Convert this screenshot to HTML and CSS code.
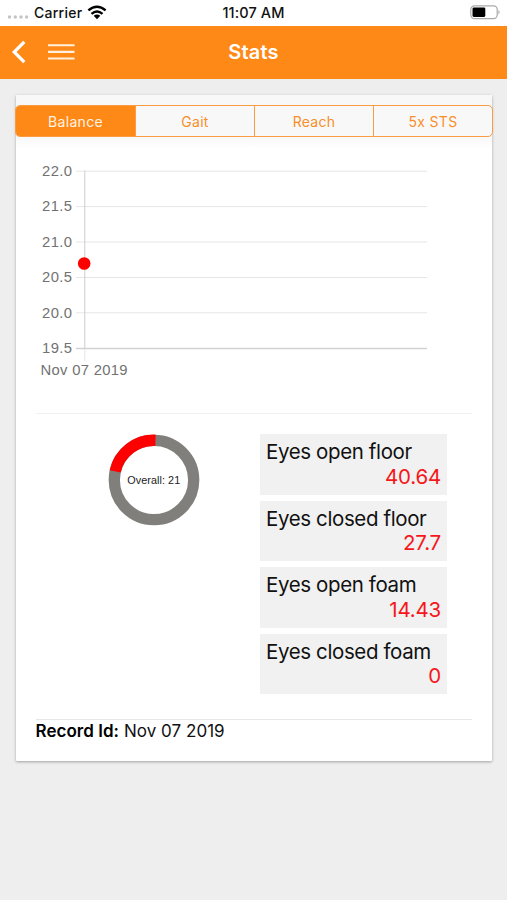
FILE: index.html
```html
<!DOCTYPE html>
<html lang="en">
<head>
<meta charset="utf-8">
<title>Stats</title>
<link rel="stylesheet" href="styles.css">
</head>
<body>
<div class="status">
  <div class="status-left">
    <svg class="dots" width="22" height="6" viewBox="0 0 22 6" fill="#c4c4c4"><circle cx="2.5" cy="3" r="1.700"/><circle cx="8.3" cy="3" r="1.700"/><circle cx="14" cy="3" r="1.700"/><circle cx="19.6" cy="3" r="1.700"/></svg>
    <span class="carrier">Carrier</span>
    <svg class="wifi" width="20" height="15" viewBox="0 0 20 15"><g fill="none" stroke="#000" stroke-width="2.5"><path d="M1.4 5.4Q10-2 18.6 5.4"/><path d="M4.5 8.9Q10 4.2 15.5 8.9"/></g><path d="M6.7 10.8Q10 8.1 13.3 10.8L10 14.2Z"/></svg>
  </div>
  <time class="clock">11:07 AM</time>
  <svg class="battery" width="31" height="15" viewBox="0 0 31 15"><rect x=".8" y=".8" width="26.4" height="12.9" rx="3.6" fill="#fff" stroke="#aaa" stroke-width="1.2"/><rect x="2.5" y="2.6" width="12.8" height="9.3" rx="1.3"/><path d="M28.4 5Q30.8 7.2 28.4 9.5Z" fill="#aaa"/></svg>
</div>
<header class="navbar">
  <div class="nav-left">
    <svg class="back" width="18" height="26" viewBox="0 0 18 26"><path d="M15.300 2.800L5.200 13L15.300 23.200" fill="none" stroke="#fff" stroke-width="3.200"/></svg>
    <svg class="menu" width="27" height="18" viewBox="0 0 27 18"><path d="M0 2.200H26.500M0 8.900H26.500M0 15.500H26.500" stroke="#fff1dd" stroke-width="2.100"/></svg>
  </div>
  <h1>Stats</h1>
</header>
<main class="card">
  <div class="tabbar">
    <nav class="tabs">
      <a class="tab active">Balance</a><a class="tab">Gait</a><a class="tab">Reach</a><a class="tab">5x STS</a>
    </nav>
  </div>
  <svg class="chart" width="476" height="263" viewBox="16 150 476 263">
    <g stroke="#e6e6e6"><path d="M76 171.200H427M76 206.600H427M76 242H427M76 277.500H427M76 312.800H427"/><path d="M84.800 348V361"/></g>
    <path d="M76 348.500H427" stroke="#d2d2d2" stroke-width="1.300"/>
    <path d="M84.800 170.500V348.500" stroke="#cdcdcd"/>
    <circle cx="84.200" cy="263.500" r="6.300" fill="#f00"/>
    <g class="axis">
      <text x="42" y="175.900" textLength="30">22.0</text>
      <text x="42" y="211.400" textLength="30">21.5</text>
      <text x="42" y="246.800" textLength="30">21.0</text>
      <text x="42" y="282.300" textLength="30">20.5</text>
      <text x="42" y="317.700" textLength="30">20.0</text>
      <text x="42" y="353.100" textLength="30">19.5</text>
      <text x="40.500" y="374.900" textLength="87">Nov 07 2019</text>
    </g>
  </svg>
  <section class="results">
    <svg class="donut" width="92" height="92" viewBox="0 0 92 92">
      <circle cx="46" cy="46" r="39.700" fill="none" stroke="#817f7b" stroke-width="11.300"/>
      <path d="M7.200 37.400A39.700 39.700 0 0 1 47.500 6.300" fill="none" stroke="#f00" stroke-width="11.300"/>
      <text class="overall" x="19.200" y="49.900" textLength="53">Overall: 21</text>
    </svg>
    <div class="stats">
      <div class="stat"><span>Eyes open floor</span><b>40.64</b></div>
      <div class="stat"><span>Eyes closed floor</span><b>27.7</b></div>
      <div class="stat"><span>Eyes open foam</span><b>14.43</b></div>
      <div class="stat"><span>Eyes closed foam</span><b>0</b></div>
    </div>
  </section>
  <footer class="record"><strong>Record Id:</strong> Nov 07 2019</footer>
</main>
</body>
</html>
```
FILE: styles.css
```css
* { box-sizing: border-box; }
body {
  margin: 0;
  height: 900px;
  overflow: hidden;
  background: #eee;
  color: #111;
  font-family: Inter, "Liberation Sans", sans-serif;
}
.status {
  display: grid;
  grid-template-columns: 1fr auto 1fr;
  align-items: center;
  height: 25.500px;
  padding: 0 7px;
  background: #fff;
  font-size: 14px;
  font-weight: 500;
}
.status-left { display: flex; align-items: center; }
.dots { margin-top: 8px; }
.carrier { margin-left: 5px; letter-spacing: .25px; }
.wifi { margin-left: 5px; }
.clock { font-size: 14.500px; letter-spacing: .1px; }
.battery { justify-self: end; margin-right: -1px; }
.navbar {
  display: grid;
  grid-template-columns: 1fr auto 1fr;
  align-items: center;
  height: 53.500px;
  padding: 0 9px 1px;
  background: #ff8917;
  color: #fff;
}
.nav-left { display: flex; align-items: center; }
.menu { margin-left: 21px; }
h1 { margin: 0; font-size: 20px; font-weight: 600; letter-spacing: .2px; }
.card {
  width: 476px;
  height: 666px;
  margin: 16px 0 0 16px;
  background: #fff;
  border-radius: 1px;
  box-shadow: 0 1px 3px rgba(0, 0, 0, .32);
}
.tabbar {
  height: 55px;
  padding-top: 10px;
  background: linear-gradient(#f8f8f8 75%, #fff);
}
.tabs {
  display: grid;
  grid-template-columns: repeat(4, 1fr);
  height: 32px;
  margin: 0 -1px;
  border: 1.500px solid #f99c43;
  border-radius: 5px;
  overflow: hidden;
}
.tab {
  display: flex;
  align-items: center;
  justify-content: center;
  color: #f78f2b;
  font-size: 14px;
  letter-spacing: .3px;
}
.tab + .tab { border-left: 1.500px solid #f99c43; }
.tab.active { background: #ff8917; color: #fff3e2; }
.chart { display: block; }
.axis { fill: #727272; font: 14.800px "Liberation Sans", sans-serif; }
.results {
  display: flex;
  align-items: flex-start;
  height: 307px;
  margin: 0 20px;
  padding-top: 20px;
  border-top: 1.500px solid #f0f0f0;
  border-bottom: 1.500px solid #e7e7e7;
}
.donut { margin-left: 72px; }
.overall { fill: #222; font: 10.800px "Liberation Sans", sans-serif; }
.stats {
  display: grid;
  gap: 6px;
  width: 187px;
  margin-left: 60px;
}
.stat {
  height: 60.600px;
  padding: 6px 6px 0 6px;
  background: #f1f1f1;
  font-size: 20.500px;
  letter-spacing: -.38px;
  line-height: 24.500px;
}
.stat span, .stat b { display: block; font-weight: 400; white-space: nowrap; }
.stat b { color: #f5171b; text-align: right; letter-spacing: -.2px; }
.record { margin-left: 19.500px; padding-top: 1px; font-size: 17px; line-height: 21px; letter-spacing: .04px; }
.record strong { color: #000; font-weight: 600; }
```
